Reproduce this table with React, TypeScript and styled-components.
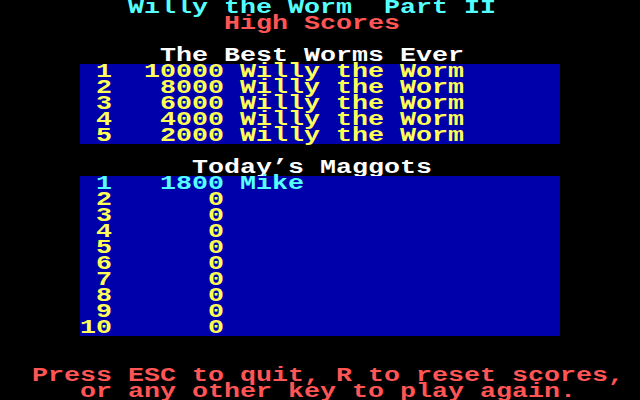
import React from "react";
import styled, { createGlobalStyle } from "styled-components";

const CELL_W = 12; // design cell width before the horizontal scale
const CELL_H = 16;

const Global = createGlobalStyle`
  html, body {
    margin: 0;
    padding: 0;
    background: #000000;
    overflow: hidden;
  }
`;

const Screen = styled.div`
  width: ${CELL_W * 40}px;
  height: ${CELL_H * 25}px;
  background: #000000;
  transform: scaleX(1.3333333);
  transform-origin: left top;
  font-family: "Liberation Mono", "DejaVu Sans Mono", monospace;
  font-weight: bold;
  font-size: 20px;
  line-height: ${CELL_H}px;
  white-space: pre;
  display: flex;
  flex-direction: column;
`;

const Line = styled.div<{ $col?: number; $color?: string }>`
  height: ${CELL_H}px;
  padding-left: ${(p) => (p.$col ?? 0) * CELL_W}px;
  color: ${(p) => p.$color ?? "#ffffff"};
`;

const Blank = styled.div<{ $rows?: number }>`
  height: ${(p) => (p.$rows ?? 1) * CELL_H}px;
`;

const Panel = styled.div`
  margin-left: ${5 * CELL_W}px;
  width: ${30 * CELL_W}px;
  background: #0000aa;
  display: flex;
  flex-direction: column;
`;

const ScoreRow = styled.div<{ $hl?: boolean }>`
  height: ${CELL_H}px;
  color: ${(p) => (p.$hl ? "#55ffff" : "#ffff55")};
`;

const CYAN = "#55ffff";
const RED = "#ff5555";

type Entry = { score: number; name: string };

const best: Entry[] = [
  { score: 10000, name: "Willy the Worm" },
  { score: 8000, name: "Willy the Worm" },
  { score: 6000, name: "Willy the Worm" },
  { score: 4000, name: "Willy the Worm" },
  { score: 2000, name: "Willy the Worm" },
];

const today: Entry[] = [
  { score: 1800, name: "Mike" },
  ...Array.from({ length: 9 }, () => ({ score: 0, name: "" })),
];

const fmt = (rank: number, e: Entry) =>
  `${String(rank).padStart(2)}${String(e.score).padStart(7)}${e.name ? " " + e.name : ""}`;

export default function App() {
  return (
    <>
      <Global />
      <Screen>
        <Line $col={8} $color={CYAN}>Willy the Worm  Part II</Line>
        <Line $col={14} $color={RED}>High Scores</Line>
        <Blank />
        <Line $col={10}>The Best Worms Ever</Line>
        <Panel>
          {best.map((e, i) => (
            <ScoreRow key={i}>{fmt(i + 1, e)}</ScoreRow>
          ))}
        </Panel>
        <Blank />
        <Line $col={12}>Today’s Maggots</Line>
        <Panel>
          {today.map((e, i) => (
            <ScoreRow key={i} $hl={i === 0}>
              {fmt(i + 1, e)}
            </ScoreRow>
          ))}
        </Panel>
        <Blank $rows={2} />
        <Line $col={2} $color={RED}>Press ESC to quit, R to reset scores,</Line>
        <Line $col={5} $color={RED}>or any other key to play again.</Line>
      </Screen>
    </>
  );
}
